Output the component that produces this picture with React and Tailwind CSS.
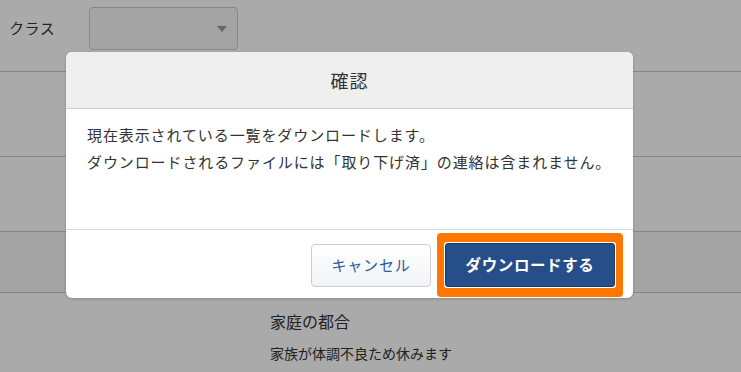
import React from 'react';

const font = { fontFamily: '"Noto Sans CJK JP", "Noto Sans", sans-serif' };

const App = () => {
    return (
        <div className="relative w-[741px] h-[372px] overflow-hidden bg-white text-[#333]" style={font}>
            {/* page underneath */}
            <div className="flex flex-col">
                <div className="h-[72px] flex items-center gap-[34px] pl-[9px] border-b border-[#c8c8c8]">
                    <span className="text-[15px] tracking-[0.5px] -mt-[14px]">クラス</span>
                    <div className="w-[149px] h-[43px] -mt-[14px] rounded-[4px] border border-[#ccc] bg-[#f7f7f7] flex items-center justify-end pr-[10px]">
                        <svg width="10" height="6" viewBox="0 0 10 6"><path d="M0 0h10L5 6z" fill="#999" /></svg>
                    </div>
                </div>
                <div className="h-[85px] border-b border-[#c8c8c8]" />
                <div className="h-[75px] border-b border-[#c8c8c8]" />
                <div className="h-[61px] border-b border-[#c8c8c8] bg-[#f5f5f5]" />
                <div className="pl-[270px] pt-[16px]">
                    <p className="text-[16px]">家庭の都合</p>
                    <p className="text-[14px] mt-[10px]">家族が体調不良ため休みます</p>
                </div>
            </div>

            {/* overlay + dialog */}
            <div className="absolute inset-0 bg-black/[0.335]">
                <div className="absolute left-[66px] top-[52px] w-[567px] h-[246px] bg-white rounded-[6px] shadow-[0_1px_3px_rgba(0,0,0,0.2)] flex flex-col overflow-hidden">
                    <div className="h-[57px] bg-[#efefef] border-b border-[#cfcfcf] flex items-center justify-center">
                        <h2 className="text-[18px] tracking-[1px]">確認</h2>
                    </div>
                    <div className="h-[121px] border-b border-[#d6d6d6] px-[21px] pt-[12px] text-[15px] leading-[27px] tracking-[0.9px]">
                        <p>現在表示されている一覧をダウンロードします。</p>
                        <p>ダウンロードされるファイルには「取り下げ済」の連絡は含まれません。</p>
                    </div>
                    <div className="flex-1 flex items-center justify-end gap-[6px] pr-[10px] pt-[2px]">
                        <button className="w-[120px] h-[43px] rounded-[4px] border border-[#ccc] bg-gradient-to-b from-white to-[#f1f3f6] text-[#2a5aa0] text-[15px] tracking-[0.8px]">
                            キャンセル
                        </button>
                        <div className="bg-[#ff7700] rounded-[4px] px-[7px] py-[9px]">
                            <div className="bg-white p-px rounded-[3px]">
                                <button className="w-[170px] h-[44px] rounded-[3px] border border-[#1c3a66] bg-[#264e88] text-white font-semibold text-[15.5px] tracking-[0.6px]">
                                    ダウンロードする
                                </button>
                            </div>
                        </div>
                    </div>
                </div>
            </div>
        </div>
    );
};

export default App;
